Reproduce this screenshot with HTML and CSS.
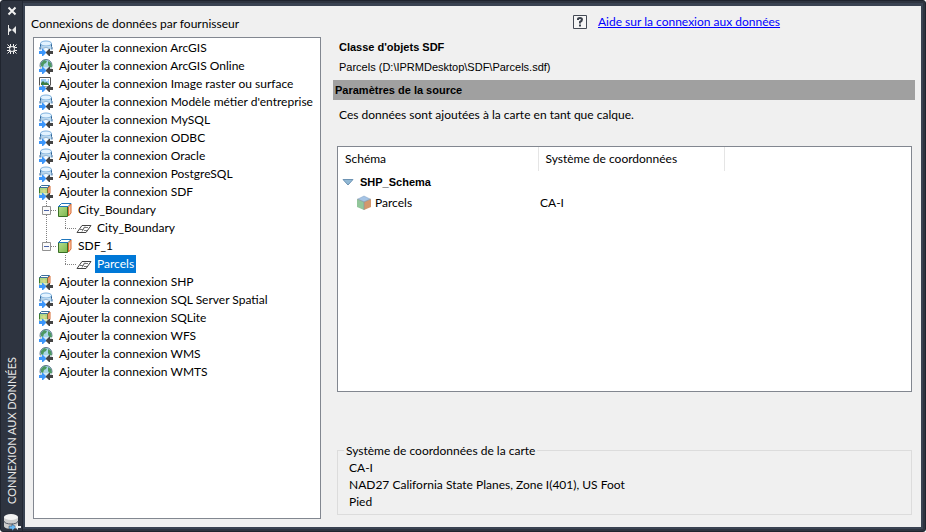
FILE: index.html
```
<!DOCTYPE html>
<html lang="fr">

<head>
  <meta charset="UTF-8">
  <meta name="viewport" content="width=device-width, initial-scale=1.0">
  <title>Connexion aux données</title>
  <link rel="stylesheet" href="styles.css">
</head>

<body>
  <!-- icons -->
  <svg class="sprite" aria-hidden="true">
    <defs>
      <linearGradient id="glass" x2="1">
        <stop offset="0" stop-color="#8dbbe0"/>
        <stop offset=".5" stop-color="#f4fbff"/>
        <stop offset="1" stop-color="#a5cdeb"/>
      </linearGradient>
      <linearGradient id="leaf" x2="1" y2="1">
        <stop offset="0" stop-color="#b5dc8c"/>
        <stop offset="1" stop-color="#7cb84e"/>
      </linearGradient>
    </defs>
    <symbol id="arrows" viewBox="0 0 16 16">
      <path d="M0 9h16v7H0z" fill="#fff" fill-opacity=".5"/>
      <path d="M1 11h3V9h1l3 3v1l-3 3H4v-2H1z" fill="#3c96fa"/>
      <path d="M15 11h-3V9h-1l-3 3v1l3 3h1v-2h3z" fill="#444"/>
    </symbol>
    <symbol id="db" viewBox="0 0 16 16">
      <path d="M3 3.500v3l-1 1v3h12v-3l-1-1v-3z" fill="url(#glass)"/>
      <path d="M2.500 3v3.500l-.5 1V10M13.500 3v3.500l.5 1V10" fill="none" stroke="#2b5f93"/>
      <ellipse cx="8" cy="3.500" rx="5.500" ry="2.500" fill="#e3f3ff" stroke="#7fb2de"/>
      <path d="M4 8.500q4-2.500 8 0" fill="none" stroke="#8fb5d6"/>
      <use href="#arrows"/>
    </symbol>
    <symbol id="globe" viewBox="0 0 16 16">
      <circle cx="8" cy="7.500" r="6" fill="#a9d5e8" stroke="#5d7489"/>
      <path d="M3 5l3-3 3 1-1 2-2 1-1 3-2-1zM10 3l3 2 1 4-2 1-2-3z" fill="#4d9861"/>
      <use href="#arrows"/>
    </symbol>
    <symbol id="raster" viewBox="0 0 16 16">
      <path d="M1.500 1.500h11v9h-11z" fill="#fff" stroke="#555"/>
      <path d="M3 3h8v6H3z" fill="#9ccdf3"/>
      <path d="M3 9V7l2-2 2 2 1-1 3 2v1z" fill="#3d7d42"/>
      <circle cx="9" cy="4" r="1" fill="#fff"/>
      <use href="#arrows"/>
    </symbol>
    <symbol id="sdf" viewBox="0 0 16 16">
      <path d="M1.500 3.500h8v8h-8z" fill="#add585" stroke="#3f7d2c"/>
      <path d="M1.500 3.500l2-2h8l-2 2z" fill="#fff" stroke="#3c6f9c"/>
      <path d="M10 4l2-2v8l-2 2z" fill="#ffc5a3" stroke="#d66a32"/>
      <path d="M3 7h5M6 5v5" stroke="#e4db8c"/>
      <use href="#arrows"/>
    </symbol>
    <symbol id="cube" viewBox="0 0 16 16">
      <path d="M1.500 4.500h9v10h-9z" fill="url(#leaf)" stroke="#396f26"/>
      <path d="M1.500 4.500l3-3h9.500l-3 3z" fill="#fff" stroke="#1e75bb"/>
      <path d="M11.500 5l2.500-3v9l-2.500 3z" fill="#ffc5a3" stroke="#d66a32"/>
    </symbol>
    <symbol id="layer" viewBox="0 0 16 16">
      <path d="M1 12.500l5-7h9l-5 7z" fill="#fff" stroke="#444"/>
      <path d="M4 9.500h3l1-2h4M6 11.500l3-5M8 10.500h3" fill="none" stroke="#777"/>
    </symbol>
    <symbol id="schema" viewBox="0 0 16 16">
      <path d="M8 1l6 3-6 3-6-3z" fill="#a5c4e6" stroke="#7f9ebf" stroke-width=".5"/>
      <path d="M1 4l7 3v8l-7-3z" fill="#92c69a"/>
      <path d="M15 4L8 7v8l7-3z" fill="#d4976c"/>
      <path d="M8 7v8M1 4l7 3 7-3" fill="none" stroke="#8795a0" stroke-width=".7"/>
    </symbol>
  </svg>

  <div class="palette">
    <aside class="titlebar">
      <button class="tool" aria-label="Fermer">
        <svg width="12" height="12"><path d="M2.500 2.500l7 7M9.500 2.500l-7 7" stroke="#f2f2f2" stroke-width="2"/></svg>
      </button>
      <button class="tool" aria-label="Masquer automatiquement">
        <svg width="12" height="12"><path d="M2 1h1v10H2zM3 4l3 2-3 2zM10 2v8L6 6z" fill="#e8e8e8"/></svg>
      </button>
      <button class="tool" aria-label="Propriétés">
        <svg width="12" height="12">
          <path d="M4.500 1v10M7.500 1v10M1 4.500h10M1 7.500h10M1.500 1.500l9 9M10.500 1.500l-9 9" stroke="#eee"/>
          <circle cx="6" cy="6" r="2.500" fill="#2e3440" stroke="#eee"/>
        </svg>
      </button>
      <span class="title">CONNEXION AUX DONNÉES</span>
      <svg class="title-icon" width="18" height="18">
        <path d="M1 4v9c0 4 14 4 14 0V4z" fill="#cdcdcd"/>
        <path d="M1 8c0 4 14 4 14 0" fill="none" stroke="#555b66"/>
        <ellipse cx="8" cy="4" rx="7" ry="3" fill="#f3f3f3"/>
        <path d="M6 13h3v-2l4 3-4 4v-2H6z" fill="#69b9f5" stroke="#2e3440" stroke-width=".5"/>
        <path d="M18 13h-3v-2l-3 3 3 3v-2h3z" fill="#eee"/>
      </svg>
    </aside>

    <main class="content">
      <section class="providers">
        <h2 class="label">Connexions de données par fournisseur</h2>
        <ul class="tree" role="tree">
          <li class="row"><svg class="icon"><use href="#db"/></svg><span>Ajouter la connexion ArcGIS</span></li>
          <li class="row"><svg class="icon"><use href="#globe"/></svg><span>Ajouter la connexion ArcGIS Online</span></li>
          <li class="row"><svg class="icon"><use href="#raster"/></svg><span>Ajouter la connexion Image raster ou surface</span></li>
          <li class="row"><svg class="icon"><use href="#db"/></svg><span>Ajouter la connexion Modèle métier d'entreprise</span></li>
          <li class="row"><svg class="icon"><use href="#db"/></svg><span>Ajouter la connexion MySQL</span></li>
          <li class="row"><svg class="icon"><use href="#db"/></svg><span>Ajouter la connexion ODBC</span></li>
          <li class="row"><svg class="icon"><use href="#db"/></svg><span>Ajouter la connexion Oracle</span></li>
          <li class="row"><svg class="icon"><use href="#db"/></svg><span>Ajouter la connexion PostgreSQL</span></li>
          <li class="row"><svg class="icon"><use href="#sdf"/></svg><span>Ajouter la connexion SDF</span></li>
          <li class="row">
            <button class="expander" aria-label="Réduire City_Boundary">
              <svg width="19" height="18">
                <path class="dots" d="M8.500 0v5M8.500 14v4M13 9.500h6"/>
                <path d="M4.500 5.500h8v8h-8z" fill="#fafafa" stroke="#919191"/>
                <path d="M6 9.500h5" stroke="#4b63a7"/>
              </svg>
            </button>
            <svg class="icon"><use href="#cube"/></svg><span>City_Boundary</span>
          </li>
          <li class="row">
            <svg width="38" height="18"><path class="dots" d="M8.500 0v18M27.500 0v9M27 9.500h11"/></svg>
            <svg class="icon"><use href="#layer"/></svg><span>City_Boundary</span>
          </li>
          <li class="row">
            <button class="expander" aria-label="Réduire SDF_1">
              <svg width="19" height="18">
                <path class="dots" d="M8.500 0v5M13 9.500h6"/>
                <path d="M4.500 5.500h8v8h-8z" fill="#fafafa" stroke="#919191"/>
                <path d="M6 9.500h5" stroke="#4b63a7"/>
              </svg>
            </button>
            <svg class="icon"><use href="#cube"/></svg><span>SDF_1</span>
          </li>
          <li class="row">
            <svg width="38" height="18"><path class="dots" d="M27.500 0v9M27 9.500h11"/></svg>
            <svg class="icon"><use href="#layer"/></svg><span class="selected">Parcels</span>
          </li>
          <li class="row"><svg class="icon"><use href="#sdf"/></svg><span>Ajouter la connexion SHP</span></li>
          <li class="row"><svg class="icon"><use href="#db"/></svg><span>Ajouter la connexion SQL Server Spatial</span></li>
          <li class="row"><svg class="icon"><use href="#sdf"/></svg><span>Ajouter la connexion SQLite</span></li>
          <li class="row"><svg class="icon"><use href="#globe"/></svg><span>Ajouter la connexion WFS</span></li>
          <li class="row"><svg class="icon"><use href="#globe"/></svg><span>Ajouter la connexion WMS</span></li>
          <li class="row"><svg class="icon"><use href="#globe"/></svg><span>Ajouter la connexion WMTS</span></li>
        </ul>
      </section>

      <section class="details">
        <div class="help">
          <svg width="14" height="14">
            <path d="M.5.5h13v13H.5z" fill="#f6f6f6" stroke="#444a55"/>
            <path d="M5 5V4q0-1 2-1t2 1.500Q9 6 7 7v1.500M7 9.500v2" fill="none" stroke="#3b414c" stroke-width="2"/>
          </svg>
          <a href="#">Aide sur la connexion aux données</a>
        </div>
        <h1 class="heading">Classe d'objets SDF</h1>
        <p class="path">Parcels (D:\IPRMDesktop\SDF\Parcels.sdf)</p>
        <h2 class="bar">Paramètres de la source</h2>
        <p class="info">Ces données sont ajoutées à la carte en tant que calque.</p>
        <div class="grid">
          <table>
            <thead>
              <tr>
                <th class="col-schema">Schéma</th>
                <th class="col-cs">Système de coordonnées</th>
              </tr>
            </thead>
            <tbody>
              <tr class="group">
                <td colspan="2">
                  <div class="cell">
                    <svg width="12" height="8"><path d="M1 1.500h10L6 7z" fill="#91b8d4" stroke="#6d93b3"/></svg>
                    <span>SHP_Schema</span>
                  </div>
                </td>
              </tr>
              <tr>
                <td>
                  <div class="cell item"><svg class="icon"><use href="#schema"/></svg><span>Parcels</span></div>
                </td>
                <td>CA-I</td>
              </tr>
            </tbody>
          </table>
        </div>
        <fieldset class="map-cs">
          <legend>Système de coordonnées de la carte</legend>
          <p>CA-I</p>
          <p>NAD27 California State Planes, Zone I(401), US Foot</p>
          <p>Pied</p>
        </fieldset>
      </section>
    </main>
  </div>
</body>

</html>
```
FILE: styles.css
```
* {
  box-sizing: border-box;
}
body {
  margin: 0;
  font-family: "Segoe UI", Lato, "Open Sans", sans-serif;
  font-size: 12px;
  line-height: 18px;
  color: #000;
  background: #fff;
}
h1, h2, p, ul {
  margin: 0;
  padding: 0;
}
button {
  border: none;
  background: none;
  padding: 0;
  display: block;
}
svg {
  display: block;
  flex: none;
}
.sprite {
  position: absolute;
  width: 0;
  height: 0;
}
.palette {
  display: flex;
  min-height: 100vh;
  padding-right: 2px;
  border: 1px solid #1f242e;
  border-radius: 3px;
  background: #2e3440;
}
.titlebar {
  display: flex;
  flex-direction: column;
  align-items: center;
  width: 22px;
  padding-top: 4px;
  border-right: 1px solid #222834;
}
.tool {
  margin-bottom: 7px;
}
.title {
  margin-top: auto;
  margin-bottom: 9px;
  writing-mode: vertical-rl;
  transform: rotate(180deg);
  font-size: 11px;
  color: #e6e6e6;
}
.content {
  flex: 1;
  display: flex;
  margin: 2px 0;
  border: 2px solid #3a4352;
  border-top-width: 3px;
  background: #f0f0f0;
}

/* left side */
.providers {
  display: flex;
  flex-direction: column;
  width: 296px;
  padding: 9px 0 8px 8px;
}
.label {
  font-size: 12px;
  font-weight: normal;
  margin: 0 0 4px -2px;
}
.tree {
  flex: 1;
  list-style: none;
  padding: 1px 4px;
  border: 1px solid #828790;
  background: #fff;
  white-space: nowrap;
}
.row {
  display: flex;
  align-items: center;
  height: 18px;
}
.row span {
  padding: 0 2px;
  margin-left: 3px;
}
.row .selected {
  background: #0078d7;
  color: #fff;
}
.icon {
  width: 16px;
  height: 16px;
}
.dots {
  fill: none;
  stroke: #808080;
  stroke-dasharray: 1 1;
}

/* right side */
.details {
  flex: 1;
  display: flex;
  flex-direction: column;
  padding: 7px 6px 12px 12px;
}
.help {
  display: flex;
  align-items: center;
  gap: 11px;
  margin-left: 240px;
}
.help a {
  color: #0000ff;
}
.heading {
  margin: 7px 0 2px 6px;
  font: bold 11px/18px "Liberation Sans", Arial, sans-serif;
}
.path {
  margin-left: 6px;
  font: 11px/18px "Liberation Sans", Arial, sans-serif;
}
.bar {
  margin: 4px 0 6px;
  padding: 2px;
  font: bold 11px/16px "Liberation Sans", Arial, sans-serif;
  background: #a0a0a0;
}
.info {
  margin-left: 6px;
}
.grid {
  flex: 1;
  margin: 22px 3px 0 4px;
  border: 1px solid #828790;
  background: #fff;
}
.grid table {
  width: 387px;
  border-collapse: collapse;
  table-layout: fixed;
}
.grid th {
  height: 24px;
  padding: 0 7px;
  border-right: 1px solid #e5e5e5;
  font-weight: normal;
  text-align: left;
}
.col-schema {
  width: 200px;
}
.grid td {
  height: 21px;
  padding: 0 2px;
}
.cell {
  display: flex;
  align-items: center;
  gap: 6px;
  padding-left: 2px;
}
.group .cell {
  font: bold 11px/18px "Liberation Sans", Arial, sans-serif;
}
.cell.item {
  gap: 3px;
  padding-left: 16px;
}
.map-cs {
  margin: 50px 3px 0 4px;
  padding: 0 11px 4px;
  border: 1px solid #dcdcdc;
  line-height: 17px;
}
.map-cs legend {
  margin-left: -5px;
  padding: 0 2px;
}
```
